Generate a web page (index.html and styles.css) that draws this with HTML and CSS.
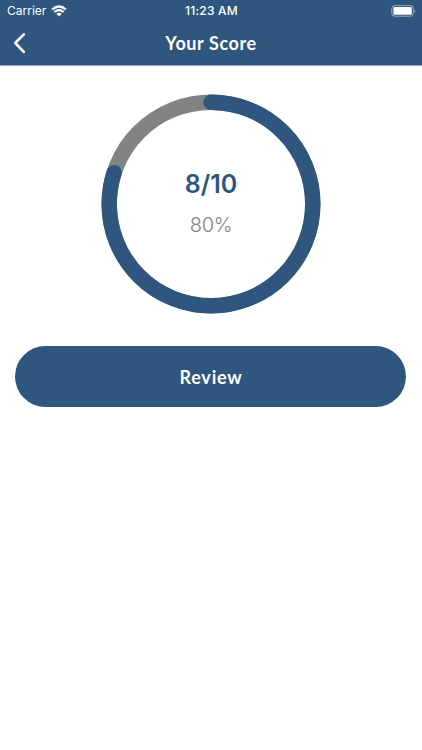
FILE: index.html
```html
<!DOCTYPE html>
<html lang="en">
<head>
<meta charset="utf-8">
<title>Your Score</title>
<link rel="stylesheet" href="styles.css">
</head>
<body>
<header class="header">
  <div class="status">
    <div class="carrier"><span class="carrier-name">Carrier</span>
      <svg class="wifi" width="16" height="12" viewBox="0 0 16 12" fill="none" stroke="#fff" stroke-width="2.2"><path d="M1.1 4.5Q8-1.5 14.9 4.5"/><path d="M3.3 7Q8 3.1 12.7 7"/><path d="M5.4 8.7Q8 6.8 10.6 8.7L8 11.5Z" fill="#fff" stroke="none"/></svg>
    </div>
    <time class="clock">11:23 AM</time>
    <svg class="battery" width="25" height="12" viewBox="0 0 25 12"><rect x=".8" y=".6" width="21.6" height="10.6" rx="3" fill="none" stroke="#fff" stroke-opacity=".5"/><rect x="2.4" y="2" width="18.4" height="7.8" rx="1.4" fill="#fff"/><path d="M23.6 4.1Q25.3 5.9 23.6 7.8Z" fill="#fff" fill-opacity=".55"/></svg>
  </div>
  <div class="nav">
    <svg class="back" width="14" height="22" viewBox="0 0 14 22" fill="none" stroke="#fff" stroke-width="2.6" stroke-linecap="round" stroke-linejoin="round"><path d="M11.8 2.4 3.2 11 11.8 19.8"/></svg>
    <h1 class="title">Your Score</h1>
    <span></span>
  </div>
</header>
<main class="content">
  <section class="score">
    <svg class="ring" viewBox="0 0 220 220" fill="none" stroke-width="15.4"><circle cx="110" cy="110" r="101.8" stroke="#838383"/><circle cx="110" cy="110" r="101.8" stroke="#2e567e" pathLength="100" stroke-dasharray="80 100" stroke-linecap="round" transform="rotate(-90 110 110)"/></svg>
    <div class="result">
      <div class="points">8/10</div>
      <div class="percent">80%</div>
    </div>
  </section>
  <button class="review"><span class="review-label">Review</span></button>
</main>
</body>
</html>
```
FILE: styles.css
```css
* { box-sizing: border-box; }
body { margin: 0; background: #fff; font-family: Inter, sans-serif; }
.header { height: 66px; background: #2e567e; border-bottom: 1px solid #91a6bc; color: #fff; }
.status { height: 22px; display: grid; grid-template-columns: 1fr auto 1fr; align-items: center; padding: 0 6px 0 7px; font-size: 12px; line-height: 22px; }
.carrier { display: flex; align-items: center; gap: 5px; }
.carrier-name { font-size: 12px; letter-spacing: 0; }
.wifi { margin-bottom: 1px; }
.clock { font-weight: 500; letter-spacing: .2px; }
.battery { justify-self: end; margin-bottom: 1px; }
.nav { height: 42px; display: grid; grid-template-columns: 1fr auto 1fr; align-items: center; padding: 0 12px; }
.title { margin: 0; font: 700 18px/42px Lato, sans-serif; letter-spacing: .6px; }
.content { padding: 28px 16px 0 15px; }
.score { width: 220px; height: 220px; margin: 0 0 0 86px; display: grid; }
.ring, .result { grid-area: 1 / 1; }
.ring { width: 220px; height: 220px; }
.result { text-align: center; padding-top: 74px; }
.points { color: #2e567e; font-size: 25px; font-weight: 600; line-height: 32px; }
.percent { color: #858585; font-size: 20px; font-weight: 300; line-height: 28px; margin-top: 11px; letter-spacing: -.3px; }
.review { display: block; width: 100%; height: 61px; margin: 32px 0 0; padding: 2px 0 0 1px; border: 0; border-radius: 31px; background: #2e567e; color: #fff; font: 700 18px/59px Lato, sans-serif; letter-spacing: .8px; }
```
